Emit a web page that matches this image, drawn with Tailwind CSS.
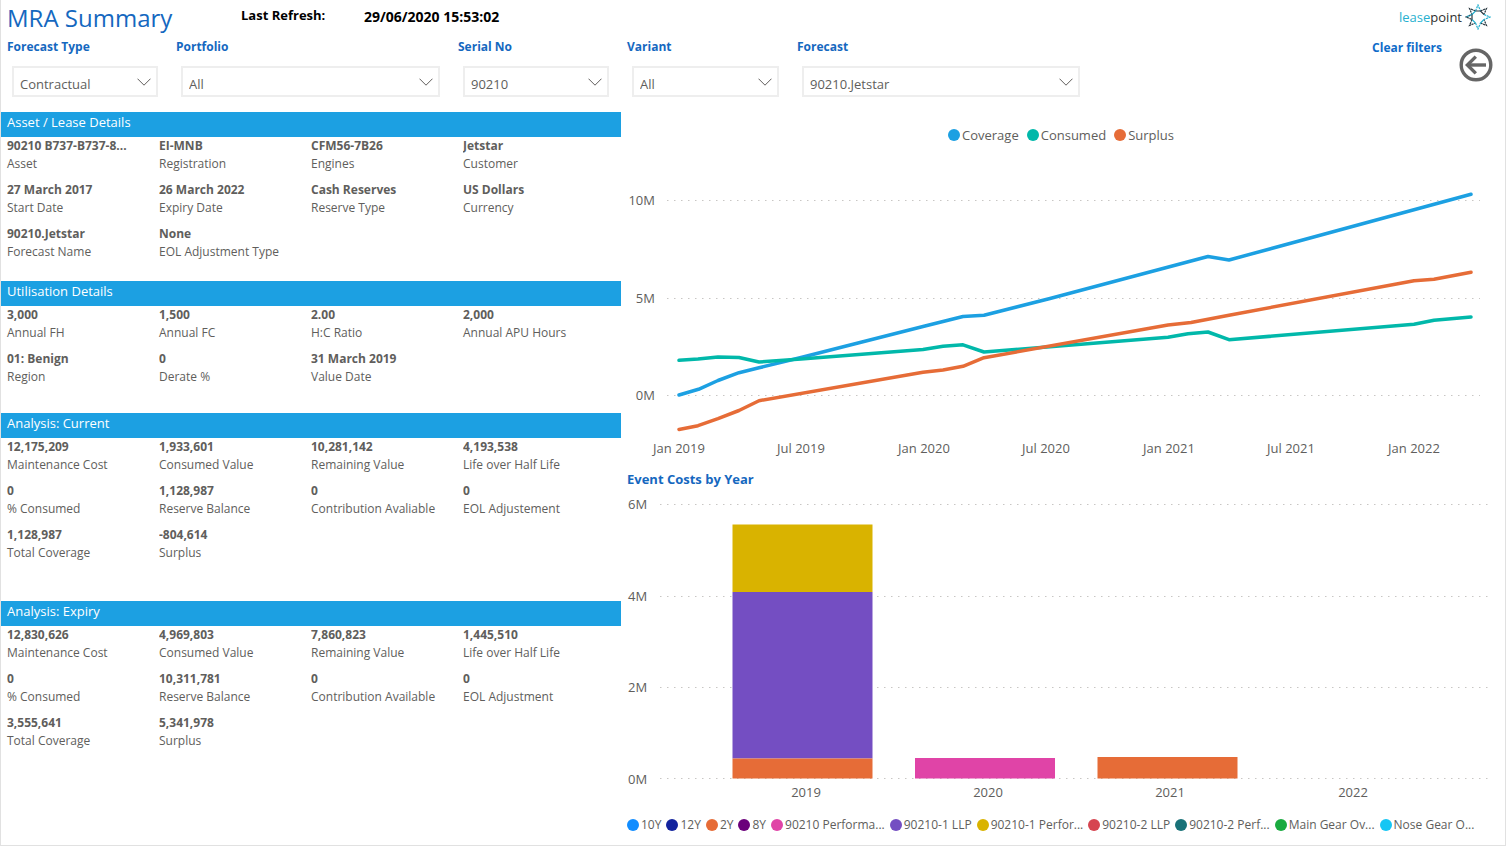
<!DOCTYPE html>
<html lang="en">
<head>
<meta charset="utf-8">
<meta name="viewport" content="width=device-width, initial-scale=1">
<title>MRA Summary</title>
<script src="https://cdn.jsdelivr.net/npm/@tailwindcss/browser@4"></script>
</head>
<body class="min-h-screen bg-white font-['Open_Sans','Noto_Sans',sans-serif] text-[#605e5c]">
<div class="border-x border-b border-[#e1e1e1] pb-[10px]">

<header class="relative">
  <div class="flex h-9 items-center pl-[6px] font-bold text-black">
    <h1 class="w-[234px] text-2xl font-normal text-[#1568bf]">MRA Summary</h1>
    <span class="w-[123px] pb-1 text-[13px]">Last Refresh:</span>
    <time class="pb-1 text-[14px]">29/06/2020 15:53:02</time>
  </div>

  <form class="grid grid-cols-[169fr_282fr_169fr_170fr_301fr_407fr] pl-[6px]">
    <div class="pr-[18px]">
      <label for="type" class="block text-[12px] leading-[22px] font-bold text-[#1568bf]">Forecast Type</label>
      <div class="relative mt-2 ml-[5px]">
        <select id="type" class="h-[31px] w-full appearance-none border-2 border-[#eee] bg-white pt-1 pl-[6px] text-[13px] leading-5"><option>Contractual</option></select>
        <svg class="pointer-events-none absolute top-3 right-[7px] h-2 w-[14px]" viewBox="0 0 14 8" fill="none" stroke="#605e5c"><path d="M.5 .7 7 7.2 13.5 .7"/></svg>
      </div>
    </div>
    <div class="pr-[18px]">
      <label for="portfolio" class="block text-[12px] leading-[22px] font-bold text-[#1568bf]">Portfolio</label>
      <div class="relative mt-2 ml-[5px]">
        <select id="portfolio" class="h-[31px] w-full appearance-none border-2 border-[#eee] bg-white pt-1 pl-[6px] text-[13px] leading-5"><option>All</option></select>
        <svg class="pointer-events-none absolute top-3 right-[7px] h-2 w-[14px]" viewBox="0 0 14 8" fill="none" stroke="#605e5c"><path d="M.5 .7 7 7.2 13.5 .7"/></svg>
      </div>
    </div>
    <div class="pr-[18px]">
      <label for="serial" class="block text-[12px] leading-[22px] font-bold text-[#1568bf]">Serial No</label>
      <div class="relative mt-2 ml-[5px]">
        <select id="serial" class="h-[31px] w-full appearance-none border-2 border-[#eee] bg-white pt-1 pl-[6px] text-[13px] leading-5"><option>90210</option></select>
        <svg class="pointer-events-none absolute top-3 right-[7px] h-2 w-[14px]" viewBox="0 0 14 8" fill="none" stroke="#605e5c"><path d="M.5 .7 7 7.2 13.5 .7"/></svg>
      </div>
    </div>
    <div class="pr-[18px]">
      <label for="variant" class="block text-[12px] leading-[22px] font-bold text-[#1568bf]">Variant</label>
      <div class="relative mt-2 ml-[5px]">
        <select id="variant" class="h-[31px] w-full appearance-none border-2 border-[#eee] bg-white pt-1 pl-[6px] text-[13px] leading-5"><option>All</option></select>
        <svg class="pointer-events-none absolute top-3 right-[7px] h-2 w-[14px]" viewBox="0 0 14 8" fill="none" stroke="#605e5c"><path d="M.5 .7 7 7.2 13.5 .7"/></svg>
      </div>
    </div>
    <div class="pr-[18px]">
      <label for="forecast" class="block text-[12px] leading-[22px] font-bold text-[#1568bf]">Forecast</label>
      <div class="relative mt-2 ml-[5px]">
        <select id="forecast" class="h-[31px] w-full appearance-none border-2 border-[#eee] bg-white pt-1 pl-[6px] text-[13px] leading-5"><option>90210.Jetstar</option></select>
        <svg class="pointer-events-none absolute top-3 right-[7px] h-2 w-[14px]" viewBox="0 0 14 8" fill="none" stroke="#605e5c"><path d="M.5 .7 7 7.2 13.5 .7"/></svg>
      </div>
    </div>
    <div class="flex items-start justify-end gap-[17px] pr-3">
      <button type="reset" class="text-[12px] leading-6 font-bold text-[#0f6cc9]">Clear filters</button>
      <button type="button" aria-label="Back" class="mt-3">
        <svg class="size-[34px]" viewBox="0 0 34 34" fill="none" stroke="#666" stroke-width="3.4"><circle cx="17" cy="17" r="14.8"/><path d="M27 17H9"/><path d="M16.8 8.6 8.4 17l8.4 8.4"/></svg>
      </button>
    </div>
  </form>

  <a href="#" aria-label="leasepoint" class="absolute top-1 right-[14px] flex items-center gap-[3px] text-[13px] leading-6 font-medium text-[#2f2f2f]">
    <span><span class="text-[#27b0cf]">lease</span>point</span>
    <svg class="size-[26px]" viewBox="0 0 26 26" fill="none" stroke-width="1.2">
      <path stroke="#2b3942" stroke-dasharray="2.200 .7" d="M10.500 7 4.500 4.500 7 10.500 1 13 7 15.500M15.500 7 21.500 4.500 19 10.500M15.500 19 21.500 21.500 19 15.500M7 15.500 4.500 21.500 10.500 19"/>
      <path stroke="#27b0cf" stroke-dasharray="2.200 .7" d="M10.500 7 13 1 15.500 7M19 10.500 25 13 19 15.500M10.500 19 13 25 15.500 19M7 10.500 1 13"/>
      <path stroke="#27b0cf" d="M7 10.500 10.500 7M19 15.500 15.500 19M7 15.500 10.500 19"/>
      <path stroke="#2b3942" d="M10.500 7h5L19 10.500M7 10.500v5"/>
    </svg>
  </a>
</header>

<main class="mt-[15px] flex items-start">
  <div class="w-[620px] shrink-0 text-[12px] leading-[18px]">
    <section class="pb-3">
      <h2 class="h-[25px] bg-[#1ca0e2] pl-[6px] text-[13px] leading-[21px] text-white">Asset / Lease Details</h2>
      <dl class="grid grid-cols-4 gap-y-2 pr-[6px] pb-2 pl-[6px] [&_dt]:truncate [&_dt]:font-bold">
        <div><dt>90210 B737-B737-8...</dt><dd>Asset</dd></div>
        <div><dt>EI-MNB</dt><dd>Registration</dd></div>
        <div><dt>CFM56-7B26</dt><dd>Engines</dd></div>
        <div><dt>Jetstar</dt><dd>Customer</dd></div>
        <div><dt>27 March 2017</dt><dd>Start Date</dd></div>
        <div><dt>26 March 2022</dt><dd>Expiry Date</dd></div>
        <div><dt>Cash Reserves</dt><dd>Reserve Type</dd></div>
        <div><dt>US Dollars</dt><dd>Currency</dd></div>
        <div><dt>90210.Jetstar</dt><dd>Forecast Name</dd></div>
        <div><dt>None</dt><dd>EOL Adjustment Type</dd></div>
      </dl>
    </section>
    <section class="pb-[19px]">
      <h2 class="h-[25px] bg-[#1ca0e2] pl-[6px] text-[13px] leading-[21px] text-white">Utilisation Details</h2>
      <dl class="grid grid-cols-4 gap-y-2 pr-[6px] pb-2 pl-[6px] [&_dt]:truncate [&_dt]:font-bold">
        <div><dt>3,000</dt><dd>Annual FH</dd></div>
        <div><dt>1,500</dt><dd>Annual FC</dd></div>
        <div><dt>2.00</dt><dd>H:C Ratio</dd></div>
        <div><dt>2,000</dt><dd>Annual APU Hours</dd></div>
        <div><dt>01: Benign</dt><dd>Region</dd></div>
        <div><dt>0</dt><dd>Derate %</dd></div>
        <div><dt>31 March 2019</dt><dd>Value Date</dd></div>
      </dl>
    </section>
    <section class="pb-[31px]">
      <h2 class="h-[25px] bg-[#1ca0e2] pl-[6px] text-[13px] leading-[21px] text-white">Analysis: Current</h2>
      <dl class="grid grid-cols-4 gap-y-2 pr-[6px] pb-2 pl-[6px] [&_dt]:truncate [&_dt]:font-bold">
        <div><dt>12,175,209</dt><dd>Maintenance Cost</dd></div>
        <div><dt>1,933,601</dt><dd>Consumed Value</dd></div>
        <div><dt>10,281,142</dt><dd>Remaining Value</dd></div>
        <div><dt>4,193,538</dt><dd>Life over Half Life</dd></div>
        <div><dt>0</dt><dd>% Consumed</dd></div>
        <div><dt>1,128,987</dt><dd>Reserve Balance</dd></div>
        <div><dt>0</dt><dd>Contribution Avaliable</dd></div>
        <div><dt>0</dt><dd>EOL Adjustement</dd></div>
        <div><dt>1,128,987</dt><dd>Total Coverage</dd></div>
        <div><dt>-804,614</dt><dd>Surplus</dd></div>
      </dl>
    </section>
    <section>
      <h2 class="h-[25px] bg-[#1ca0e2] pl-[6px] text-[13px] leading-[21px] text-white">Analysis: Expiry</h2>
      <dl class="grid grid-cols-4 gap-y-2 pr-[6px] pb-2 pl-[6px] [&_dt]:truncate [&_dt]:font-bold">
        <div><dt>12,830,626</dt><dd>Maintenance Cost</dd></div>
        <div><dt>4,969,803</dt><dd>Consumed Value</dd></div>
        <div><dt>7,860,823</dt><dd>Remaining Value</dd></div>
        <div><dt>1,445,510</dt><dd>Life over Half Life</dd></div>
        <div><dt>0</dt><dd>% Consumed</dd></div>
        <div><dt>10,311,781</dt><dd>Reserve Balance</dd></div>
        <div><dt>0</dt><dd>Contribution Available</dd></div>
        <div><dt>0</dt><dd>EOL Adjustment</dd></div>
        <div><dt>3,555,641</dt><dd>Total Coverage</dd></div>
        <div><dt>5,341,978</dt><dd>Surplus</dd></div>
      </dl>
    </section>
  </div>

  <div class="min-w-0 flex-1">
    <ul class="flex justify-center gap-2 pt-[13px] pr-1 text-[13px] leading-5">
      <li class="flex items-center gap-[2px]"><i class="size-3 rounded-full bg-[#1ca0e2]"></i>Coverage</li>
      <li class="flex items-center gap-[2px]"><i class="size-3 rounded-full bg-[#01b8aa]"></i>Consumed</li>
      <li class="flex items-center gap-[2px]"><i class="size-3 rounded-full bg-[#e66c37]"></i>Surplus</li>
    </ul>
    <svg class="block w-full" viewBox="621 145 884 323" role="img" aria-label="Coverage, consumed and surplus over time">
      <g stroke="#c8c6c4" stroke-dasharray="1.500 5.500"><path d="M667 200.500H1480M667 298.500H1480M667 395.500H1480"/></g>
      <g fill="#605e5c" font-size="13" text-anchor="end"><text x="655" y="205">10M</text><text x="655" y="303">5M</text><text x="655" y="400">0M</text></g>
      <g fill="#605e5c" font-size="13" text-anchor="middle"><text x="679" y="453">Jan 2019</text><text x="801" y="453">Jul 2019</text><text x="924" y="453">Jan 2020</text><text x="1046" y="453">Jul 2020</text><text x="1169" y="453">Jan 2021</text><text x="1291" y="453">Jul 2021</text><text x="1414" y="453">Jan 2022</text></g>
      <g fill="none" stroke-width="3.500" stroke-linejoin="round" stroke-linecap="round">
        <polyline stroke="#1ca0e2" points="679,395 698.500,389.300 718,380.500 739,372.700 759,367.800 801,357.500 860,342.500 923,326.500 963,316.500 984,315.200 1050,298.500 1208,256.500 1229,260 1471,194.300"/>
        <polyline stroke="#01b8aa" points="679,360.300 698,359 718,357 739,357.500 759,362 801,359 923,349.500 943,346.200 963,344.800 984,352 1050,346.800 1168,337.300 1188,333.800 1208,332 1229,339.700 1414,324.300 1434,320.300 1471,317"/>
        <polyline stroke="#e66c37" points="679,429.500 698,425.700 718,418.700 739,410.500 759,400.700 923,372.300 943,370 963,366.300 984,357.700 1168,325 1191,322.500 1229,315.200 1414,280.800 1434,279.300 1471,272.200"/>
      </g>
    </svg>
    <h2 class="pl-[6px] text-[13px] leading-[22px] font-bold text-[#1568bf]">Event Costs by Year</h2>
    <svg class="block w-full" viewBox="621 490 884 322" role="img" aria-label="Event costs by year">
      <g stroke="#c8c6c4" stroke-dasharray="1.500 5.500"><path d="M660 504.500H1493M660 596.500H1493M660 687.500H1493M660 778.500H1493"/></g>
      <g fill="#605e5c" font-size="13"><text x="628" y="509">6M</text><text x="628" y="601">4M</text><text x="628" y="692">2M</text><text x="628" y="784">0M</text></g>
      <g fill="#605e5c" font-size="13" text-anchor="middle"><text x="806" y="797">2019</text><text x="988" y="797">2020</text><text x="1170" y="797">2021</text><text x="1353" y="797">2022</text></g>
      <path fill="#d9b300" d="M732.500 524.500h140v67.500h-140z"/>
      <path fill="#744ec2" d="M732.500 592h140v166.500h-140z"/>
      <path fill="#e66c37" d="M732.500 758.500h140v20h-140zM1097.500 757h140v21.500h-140z"/>
      <path fill="#e044a7" d="M915 758h140v20.500h-140z"/>
    </svg>
    <ul class="flex gap-[5px] pt-[3px] pl-[6px] text-[12px] leading-5 whitespace-nowrap [&>li]:flex [&>li]:items-center [&>li]:gap-[2px]">
      <li><i class="size-3 rounded-full bg-[#118dff]"></i>10Y</li>
      <li><i class="size-3 rounded-full bg-[#12239e]"></i>12Y</li>
      <li><i class="size-3 rounded-full bg-[#e66c37]"></i>2Y</li>
      <li><i class="size-3 rounded-full bg-[#6b007b]"></i>8Y</li>
      <li><i class="size-3 rounded-full bg-[#e044a7]"></i>90210 Performa...</li>
      <li><i class="size-3 rounded-full bg-[#744ec2]"></i>90210-1 LLP</li>
      <li><i class="size-3 rounded-full bg-[#d9b300]"></i>90210-1 Perfor...</li>
      <li><i class="size-3 rounded-full bg-[#d64550]"></i>90210-2 LLP</li>
      <li><i class="size-3 rounded-full bg-[#197278]"></i>90210-2 Perf...</li>
      <li><i class="size-3 rounded-full bg-[#1aab40]"></i>Main Gear Ov...</li>
      <li><i class="size-3 rounded-full bg-[#15c6f4]"></i>Nose Gear O...</li>
    </ul>
  </div>
</main>
</div>
</body>
</html>
